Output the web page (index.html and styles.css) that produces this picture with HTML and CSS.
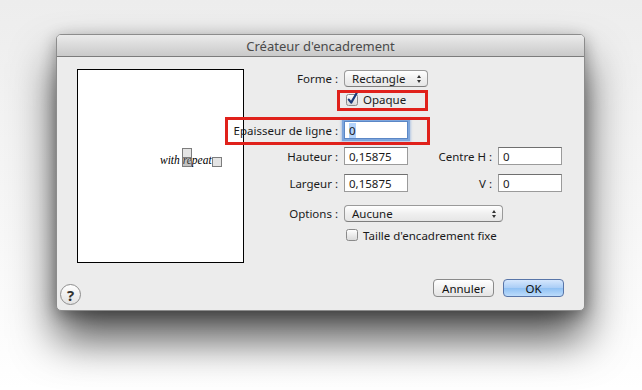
FILE: index.html
```html
<!DOCTYPE html>
<html lang="fr">
<head>
  <meta charset="UTF-8">
  <title>Créateur d'encadrement</title>
  <link rel="stylesheet" href="styles.css">
</head>
<body>

  <div class="window">
    <div class="titlebar">Créateur d'encadrement</div>
    <div class="content">

      <div class="left">
        <div class="preview">
          <span class="sample">with repeat</span>
          <span class="handle h1"></span>
          <span class="handle h2"></span>
          <span class="handle h3"></span>
        </div>
        <div class="help">?</div>
      </div>

      <div class="right">
        <div class="row r1">
          <div class="label">Forme :</div>
          <div class="popup popup-forme">Rectangle<span class="arrows"></span></div>
        </div>
        <div class="row r2">
          <div></div>
          <label class="check">
            <svg width="14" height="14" viewBox="0 0 14 14">
              <defs>
                <linearGradient id="cb" x1="0" y1="0" x2="0" y2="1">
                  <stop offset="0" stop-color="#ffffff"/>
                  <stop offset="1" stop-color="#d8d8d8"/>
                </linearGradient>
              </defs>
              <rect x="1.5" y="2.5" width="11" height="11" rx="2" fill="url(#cb)" stroke="#8a8a8a"/>
              <path d="M3.8 7.6 L6.2 10.6 L11.6 1.2" fill="none" stroke="#1d3b78" stroke-width="2.2" stroke-linecap="round" stroke-linejoin="round"/>
            </svg>
            Opaque
          </label>
        </div>
        <div class="row r3">
          <div class="label">Epaisseur de ligne :</div>
          <div class="field focus"><span class="sel">0</span></div>
        </div>
        <div class="row r4">
          <div class="label">Hauteur :</div>
          <div class="field">0,15875</div>
          <div class="label">Centre H :</div>
          <div class="field">0</div>
        </div>
        <div class="row r5">
          <div class="label">Largeur :</div>
          <div class="field">0,15875</div>
          <div class="label">V :</div>
          <div class="field">0</div>
        </div>
        <div class="row r6">
          <div class="label">Options :</div>
          <div class="popup popup-options">Aucune<span class="arrows"></span></div>
        </div>
        <div class="row r7">
          <div></div>
          <label class="check">
            <svg width="14" height="14" viewBox="0 0 14 14">
              <rect x="1.5" y="1.5" width="11" height="11" rx="2" fill="url(#cb)" stroke="#8a8a8a"/>
            </svg>
            Taille d'encadrement fixe
          </label>
        </div>
        <div class="buttons">
          <button class="btn">Annuler</button>
          <button class="btn default">OK</button>
        </div>

        <div class="mark mark-opaque"></div>
        <div class="mark mark-epaisseur"></div>
      </div>

    </div>
  </div>

</body>
</html>
```

FILE: styles.css
```css
body {
  margin: 0;
  width: 642px;
  height: 390px;
  overflow: hidden;
  background: linear-gradient(#ededed, #f7f7f7 60%, #ffffff);
  font-family: "Noto Sans", "DejaVu Sans", sans-serif;
  font-size: 11.5px;
  color: #1a1a1a;
}
.window {
  margin: 34px 0 0 56px;
  width: 527px;
  height: 275px;
  border: 1px solid #8c8c8c;
  border-radius: 5px;
  background: #ececec;
  box-shadow: 0 28px 44px rgba(0, 0, 0, 0.68), 0 4px 16px rgba(0, 0, 0, 0.32);
  display: flex;
  flex-direction: column;
}
.titlebar {
  height: 21px;
  line-height: 22px;
  text-align: center;
  font-size: 13px;
  color: #4a4a4a;
  background: linear-gradient(#ebebeb, #c9c9c9);
  border-bottom: 1px solid #7b7b7b;
  border-radius: 4px 4px 0 0;
}
.content {
  flex: 1;
  display: flex;
}
.left {
  width: 207px;
  display: flex;
  flex-direction: column;
}
.preview {
  position: relative;
  margin: 12px 0 0 20px;
  width: 165px;
  height: 192px;
  border: 1px solid #000;
  background: #fff;
}
.sample {
  position: absolute;
  left: 82px;
  top: 84px;
  font-family: "Liberation Serif", serif;
  font-style: italic;
  font-size: 11.5px;
  color: #000;
}
.handle {
  position: absolute;
  width: 8px;
  height: 8px;
  border: 1px solid #7d7d7d;
  background: #e4e4e4;
}
.h1 { left: 104px; top: 78px; }
.h2 { left: 104px; top: 87px; background: rgba(120, 120, 120, 0.45); }
.h3 { left: 134px; top: 87px; }
.help {
  margin: 21px 0 0 3px;
  width: 19px;
  height: 19px;
  border: 1px solid #8e8e8e;
  border-radius: 50%;
  background: linear-gradient(#ffffff, #e2e2e2);
  text-align: center;
  line-height: 20px;
  font-size: 15px;
  font-weight: bold;
  color: #333;
}
.right {
  position: relative;
  flex: 1;
  display: flex;
  flex-direction: column;
  padding-top: 13px;
}
.row {
  display: grid;
  grid-template-columns: 74px 64px 78px 64px;
  column-gap: 6px;
  align-items: center;
}
.label {
  display: flex;
  justify-content: flex-end;
  white-space: nowrap;
}
.r1 { height: 17px; }
.r2 { height: 24px; }
.r3 { height: 18px; margin-top: 10px; }
.r4 { height: 18px; margin-top: 8px; }
.r5 { height: 18px; margin-top: 9px; }
.r6 { height: 17px; margin-top: 13px; }
.r7 { height: 16px; margin-top: 5px; }
.field {
  height: 16px;
  line-height: 17px;
  padding-left: 4px;
  background: #fff;
  border: 1px solid #9b9b9b;
  border-top-color: #6f6f6f;
  white-space: nowrap;
}
.field.focus {
  box-shadow: 0 0 0 2px #7ea6dc, 0 0 2px 3px rgba(126, 166, 220, 0.5);
  border-color: #5b87c6;
}
.sel {
  background: #b3d3fb;
}
.popup {
  position: relative;
  grid-column: 2 / span 3;
  justify-self: start;
  height: 15px;
  line-height: 15px;
  padding-left: 7px;
  border: 1px solid #9a9a9a;
  border-bottom-color: #7e7e7e;
  border-radius: 4px;
  background: linear-gradient(#ffffff, #f0f0f0 50%, #e6e6e6);
  box-sizing: content-box;
}
.popup-forme { width: 75px; }
.popup-options { width: 150px; }
.arrows {
  position: absolute;
  right: 6px;
  top: 4px;
  width: 0;
  height: 0;
  border-left: 2.5px solid transparent;
  border-right: 2.5px solid transparent;
  border-bottom: 3px solid #333;
}
.arrows::after {
  content: "";
  position: absolute;
  left: -2.5px;
  top: 5px;
  border-left: 2.5px solid transparent;
  border-right: 2.5px solid transparent;
  border-top: 3px solid #333;
}
.check {
  grid-column: 2 / span 3;
  display: flex;
  align-items: center;
  gap: 4px;
  white-space: nowrap;
}
.check svg {
  margin-left: 1px;
}
.buttons {
  display: flex;
  justify-content: flex-end;
  gap: 9px;
  margin-top: 36px;
  padding-right: 20px;
}
.btn {
  width: 61px;
  height: 18px;
  padding: 0;
  font-family: "Noto Sans", "DejaVu Sans", sans-serif;
  font-size: 11.5px;
  color: #111;
  border: 1px solid #8a8a8a;
  border-radius: 4px;
  background: linear-gradient(#ffffff, #f1f1f1 50%, #e4e4e4);
}
.btn.default {
  border-color: #5875a8;
  background: linear-gradient(#d5e7fd, #a9cdf6 50%, #8fc0f3 51%, #bcdcfb);
}
.mark {
  position: absolute;
  border: 3px solid #e0211b;
}
.mark-opaque {
  left: 73px;
  top: 33px;
  width: 85px;
  height: 15px;
}
.mark-epaisseur {
  left: -39px;
  top: 60px;
  width: 199px;
  height: 22px;
}
```
